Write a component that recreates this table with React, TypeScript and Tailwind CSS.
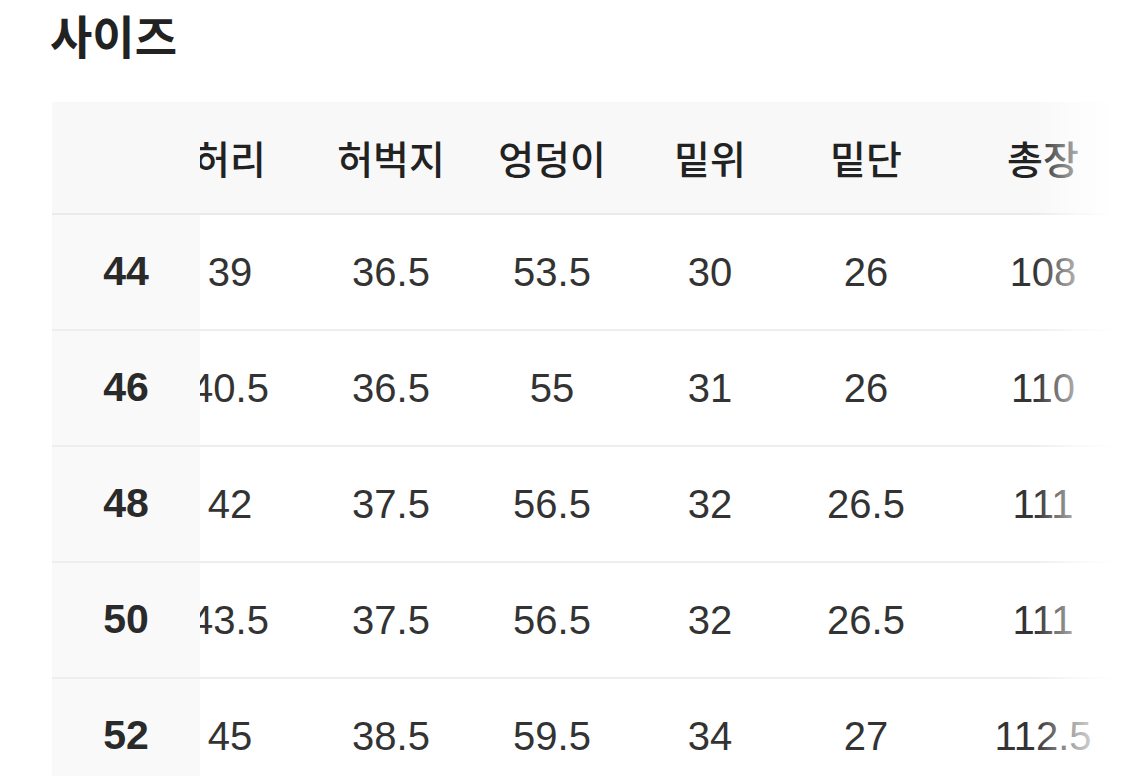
import React from 'react';

const headers = ['허리', '허벅지', '엉덩이', '밑위', '밑단', '총장'];

const rows = [
  { size: '44', values: ['39', '36.5', '53.5', '30', '26', '108'] },
  { size: '46', values: ['40.5', '36.5', '55', '31', '26', '110'] },
  { size: '48', values: ['42', '37.5', '56.5', '32', '26.5', '111'] },
  { size: '50', values: ['43.5', '37.5', '56.5', '32', '26.5', '111'] },
  { size: '52', values: ['45', '38.5', '59.5', '34', '27', '112.5'] },
];

// 각 칸 너비 (스크롤된 상태 그대로)
const colWidths = ['w-[160px]', 'w-[162px]', 'w-[160px]', 'w-[156px]', 'w-[156px]', 'w-[198px]'];

export default function App() {
  return (
    <div className="w-[1125px] h-[776px] overflow-hidden bg-white font-['Liberation_Sans','Noto_Sans_CJK_KR',sans-serif] text-[#333]">
      <h1 className="pl-[50px] pt-[4px] h-[102px] text-[46px] leading-[60px] font-semibold text-[#222] font-['Noto_Sans_CJK_KR',sans-serif]">
        사이즈
      </h1>

      {/* 사이즈 표 */}
      <div className="relative ml-[52px] w-[1063px] overflow-hidden">
        <div className="flex h-[113px] bg-[#f8f8f8] border-b-2 border-[#ebebeb]">
          <div className="w-[148px] shrink-0" />
          <div className="flex-1 overflow-hidden">
            <div className="flex h-full -ml-[50px]">
              {headers.map((h, i) => (
                <div
                  key={h}
                  className={`${colWidths[i]} shrink-0 flex items-center justify-center text-[39px] font-medium text-[#222] font-['Noto_Sans_CJK_KR',sans-serif]`}
                >
                  {h}
                </div>
              ))}
            </div>
          </div>
        </div>

        {rows.map((row) => (
          <div key={row.size} className="flex h-[116px] border-b-2 border-[#eeeeee]">
            <div className="w-[148px] shrink-0 bg-[#f9f9f9] flex items-center justify-center text-[41px] font-bold text-[#2a2a2a]">
              {row.size}
            </div>
            <div className="flex-1 overflow-hidden">
              <div className="flex h-full -ml-[50px]">
                {row.values.map((v, i) => (
                  <div
                    key={i}
                    className={`${colWidths[i]} shrink-0 flex items-center justify-center text-[40px]`}
                  >
                    {v}
                  </div>
                ))}
              </div>
            </div>
          </div>
        ))}

        {/* 오른쪽 페이드 */}
        <div className="absolute top-0 right-0 bottom-0 w-[80px] bg-gradient-to-r from-white/0 via-white/60 to-white" />
      </div>
    </div>
  );
}
